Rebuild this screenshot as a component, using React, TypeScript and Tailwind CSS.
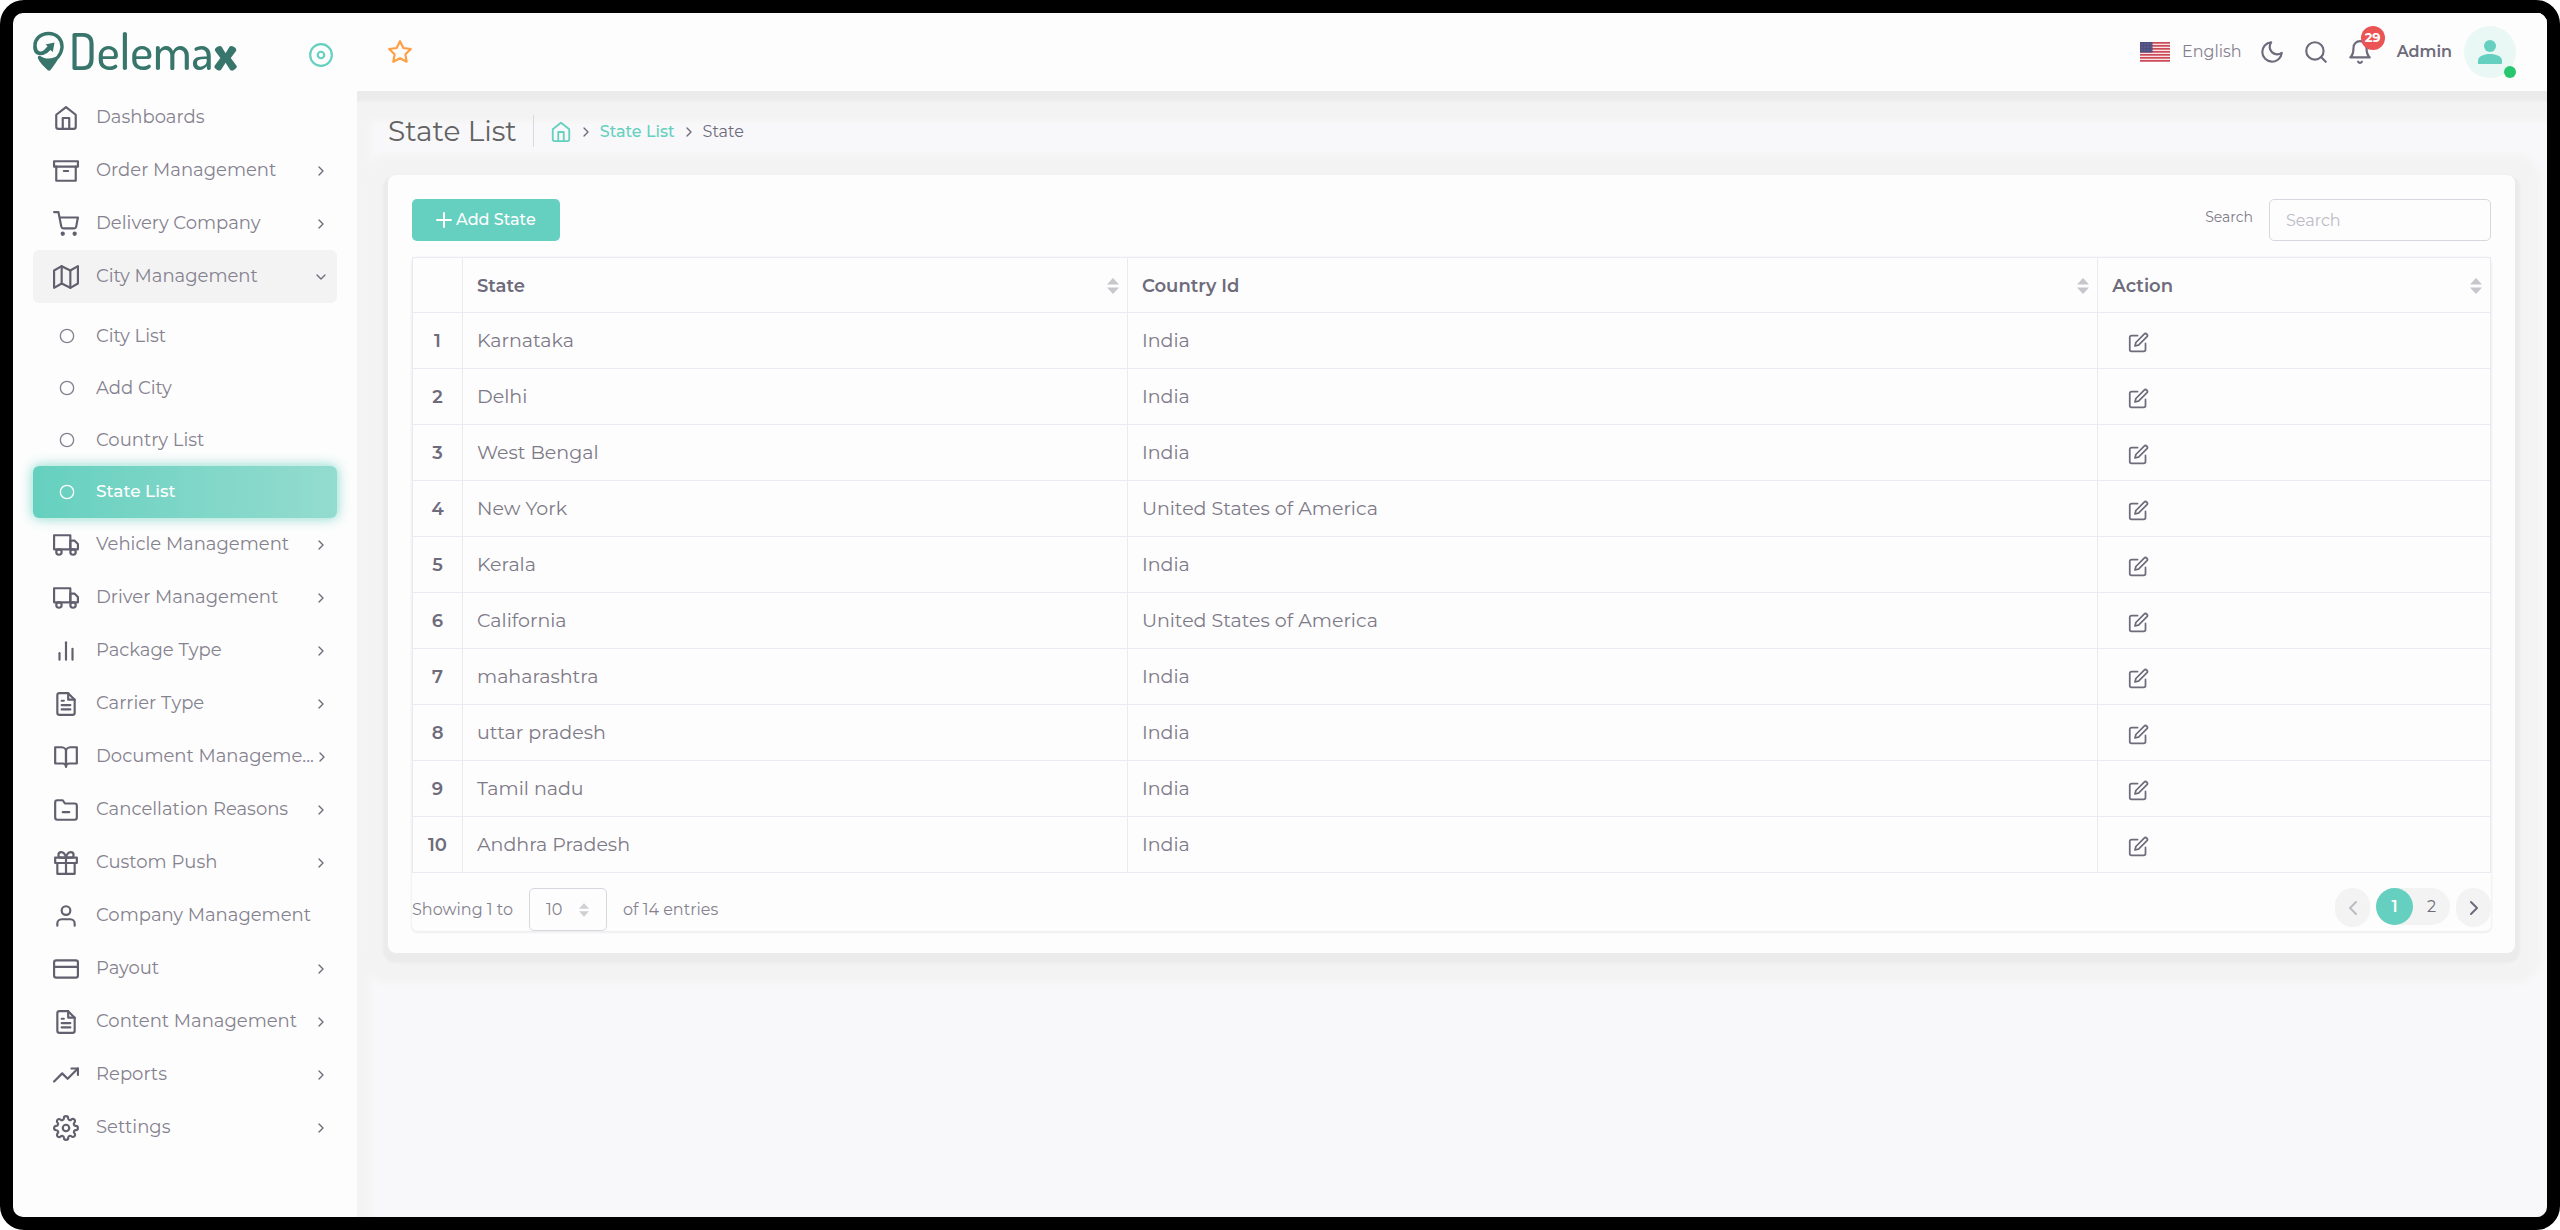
import React, { useState } from 'react';
import type { IconType } from 'react-icons';
import {
  FiArchive,
  FiBarChart2,
  FiBell,
  FiBookOpen,
  FiChevronDown,
  FiChevronLeft,
  FiChevronRight,
  FiCircle,
  FiCreditCard,
  FiDisc,
  FiEdit,
  FiFileText,
  FiFolderMinus,
  FiGift,
  FiHome,
  FiMap,
  FiMoon,
  FiPlus,
  FiSearch,
  FiSettings,
  FiShoppingCart,
  FiStar,
  FiTrendingUp,
  FiTruck,
  FiUser,
} from 'react-icons/fi';

interface NavEntry {
  label: string;
  icon: IconType;
  expandable?: boolean;
  children?: string[];
}

const NAV: NavEntry[] = [
  { label: 'Dashboards', icon: FiHome },
  { label: 'Order Management', icon: FiArchive, expandable: true },
  { label: 'Delivery Company', icon: FiShoppingCart, expandable: true },
  {
    label: 'City Management',
    icon: FiMap,
    expandable: true,
    children: ['City List', 'Add City', 'Country List', 'State List'],
  },
  { label: 'Vehicle Management', icon: FiTruck, expandable: true },
  { label: 'Driver Management', icon: FiTruck, expandable: true },
  { label: 'Package Type', icon: FiBarChart2, expandable: true },
  { label: 'Carrier Type', icon: FiFileText, expandable: true },
  { label: 'Document Manageme...', icon: FiBookOpen, expandable: true },
  { label: 'Cancellation Reasons', icon: FiFolderMinus, expandable: true },
  { label: 'Custom Push', icon: FiGift, expandable: true },
  { label: 'Company Management', icon: FiUser },
  { label: 'Payout', icon: FiCreditCard, expandable: true },
  { label: 'Content Management', icon: FiFileText, expandable: true },
  { label: 'Reports', icon: FiTrendingUp, expandable: true },
  { label: 'Settings', icon: FiSettings, expandable: true },
];

const STATES = [
  { name: 'Karnataka', country: 'India' },
  { name: 'Delhi', country: 'India' },
  { name: 'West Bengal', country: 'India' },
  { name: 'New York', country: 'United States of America' },
  { name: 'Kerala', country: 'India' },
  { name: 'California', country: 'United States of America' },
  { name: 'maharashtra', country: 'India' },
  { name: 'uttar pradesh', country: 'India' },
  { name: 'Tamil nadu', country: 'India' },
  { name: 'Andhra Pradesh', country: 'India' },
];

function Logo() {
  return (
    <a href="#" className="flex items-center gap-1 text-[#38756a]">
      <svg viewBox="0 0 32 40" className="h-10 w-8" fill="none" aria-hidden="true">
        <path
          d="M2.2 17C.6 8.500 7.500 2.500 15.500 2.500c8.500 0 14 6 13.500 14-.3 4-2 7-4 9.500"
          stroke="currentColor"
          strokeWidth="3.400"
          strokeLinecap="round"
        />
        <path
          d="M2.200 17c0 5.500 6.300 7 10.300 3.500l5-5"
          stroke="currentColor"
          strokeWidth="3.800"
          strokeLinecap="round"
        />
        <path d="M21.500 11.500l-1.700 9.500-2.300-2-4 3.500-2.800-3 4-4.300-2.200-1.700z" fill="currentColor" />
        <path
          d="M5 27.500c-.8-2.500 1-3.500 2.800-2.300 5 3.600 12 3.200 19.200-1.700-2 6-6.500 11.500-9.500 15.500-1 1-2 1-3 0C11 35.500 6.500 31.500 5 27.500z"
          fill="currentColor"
        />
      </svg>
      <span className="font-['Dosis','Roboto',sans-serif] text-[49px] leading-9 font-medium">
        Delema<span className="font-extrabold">x</span>
      </span>
    </a>
  );
}

function NavItem({ entry }: { entry: NavEntry }) {
  const { label, icon: Icon, expandable, children } = entry;
  const Chevron = children ? FiChevronDown : FiChevronRight;

  return (
    <li>
      <a
        href="#"
        className={`flex h-[53px] items-center rounded-md pr-2 pl-5 text-[18px] text-[#85828f] ${
          children ? 'bg-[#f3f3f3]' : ''
        }`}
      >
        <Icon className="size-[26px] shrink-0 text-[#625f6e]" />
        <span className="ml-[17px] flex-1 whitespace-nowrap">{label}</span>
        {expandable && <Chevron className="size-4 shrink-0 text-[#6e6b7b]" />}
      </a>
      {children && (
        <ul className="pt-[7px]">
          {children.map(child => (
            <SubItem key={child} label={child} active={child === 'State List'} />
          ))}
        </ul>
      )}
    </li>
  );
}

function SubItem({ label, active }: { label: string; active: boolean }) {
  return (
    <li>
      <a
        href="#"
        className={`flex h-[52px] items-center rounded-md pl-[26px] ${
          active
            ? 'bg-linear-to-r from-[#65d0bf] to-[#93dccf] text-[17px] font-medium text-white shadow-[0_0_12px_1px_rgba(101,208,191,0.7)]'
            : 'text-[18px] text-[#85828f]'
        }`}
      >
        <FiCircle className="size-4" />
        <span className="ml-[21px]">{label}</span>
      </a>
    </li>
  );
}

function Sidebar() {
  return (
    <aside className="z-20 w-[344px] shrink-0 bg-[#fdfdfd] px-5 pt-[18px]">
      <div className="mb-5 flex h-10 items-center justify-between pr-[3px]">
        <Logo />
        <button type="button" aria-label="Pin menu" className="pt-2 text-[#65d0bf]">
          <FiDisc className="size-[26px]" />
        </button>
      </div>
      <nav>
        <ul>
          {NAV.map(entry => (
            <NavItem key={entry.label} entry={entry} />
          ))}
        </ul>
      </nav>
    </aside>
  );
}

function UsFlag() {
  return (
    <svg viewBox="0 0 30 20" className="h-5 w-[30px]" aria-hidden="true">
      <rect width="30" height="20" fill="#f6e4e6" />
      {[0, 3, 6, 9, 12, 15, 18].map(y => (
        <rect key={y} y={y} width="30" height="1.700" fill="#cf4a58" />
      ))}
      <rect width="12.500" height="10.500" fill="#4f4f80" />
      {[2, 5, 8].map(y =>
        [2, 5, 8, 11].map(x => <circle key={`${x}-${y}`} cx={x} cy={y} r=".4" fill="#b9b9d0" />)
      )}
    </svg>
  );
}

function Header() {
  return (
    <header className="relative z-10 flex h-[78px] items-center justify-between bg-[#fdfdfd] pr-[31px] pl-[30px] shadow-[0_5px_2px_5px_#ebebeb,0_5px_6px_25px_#f3f3f3]">
      <button type="button" aria-label="Bookmarks" className="text-[#ff9f43]">
        <FiStar className="size-[26px]" />
      </button>
      <div className="flex items-center text-[#6e6b7b]">
        <button type="button" className="mr-[17px] flex items-center gap-3 text-base text-[#85828f]">
          <UsFlag />
          English
        </button>
        <div className="flex items-center gap-[18px]">
          <button type="button" aria-label="Dark mode">
            <FiMoon className="size-[26px]" />
          </button>
          <button type="button" aria-label="Search">
            <FiSearch className="size-[26px]" />
          </button>
          <button type="button" aria-label="Notifications" className="relative">
            <FiBell className="size-[26px]" />
            <span className="absolute -top-[13px] -right-3 flex size-6 items-center justify-center rounded-full bg-[#ea5455] text-[13px] font-bold text-white">
              29
            </span>
          </button>
        </div>
        <span className="ml-6 text-base font-semibold">Admin</span>
        <span className="relative ml-3 flex size-[52px] items-center justify-center rounded-full bg-[#eaf8f5]">
          <svg viewBox="0 0 24 24" className="size-6" fill="#65d0bf" aria-hidden="true">
            <circle cx="12" cy="6" r="6" />
            <path d="M0 24v-3c0-5 6-7 12-7s12 2 12 7v1.500c0 1-.5 1.500-1.500 1.500z" />
          </svg>
          <span className="absolute right-0 bottom-0 size-3 rounded-full bg-[#28c76f]" />
        </span>
      </div>
    </header>
  );
}

function Breadcrumb() {
  return (
    <div className="relative z-10 flex h-[34px] items-center">
      <h1 className="border-r border-[#d6dcdc] pr-4 text-[28px] leading-8 text-[#636363]">State List</h1>
      <nav aria-label="Breadcrumb" className="ml-4 flex items-center gap-1.5 pt-0.5 text-base text-[#6e6b7b]">
        <a href="#" aria-label="Home">
          <FiHome className="size-[22px] text-[#65d0bf]" />
        </a>
        <FiChevronRight className="size-4" />
        <a href="#" className="font-medium text-[#65d0bf]">
          State List
        </a>
        <FiChevronRight className="size-4" />
        <span>State</span>
      </nav>
    </div>
  );
}

function SortIcon() {
  return (
    <svg viewBox="0 0 12 16" className="h-4 w-3 shrink-0" fill="#c6c6cb" aria-hidden="true">
      <path d="M6 0l6 6.500H0z" />
      <path d="M6 16l6-6.500H0z" />
    </svg>
  );
}

function HeadCell({ label, width }: { label: string; width: string }) {
  return (
    <th scope="col" className={`border border-[#ebe9f1] pt-0.5 pr-2 pl-3.5 ${width}`}>
      <button type="button" className="flex w-full items-center justify-between font-semibold">
        {label}
        <SortIcon />
      </button>
    </th>
  );
}

function StateTable() {
  return (
    <table className="w-full table-fixed border-collapse text-left text-[19px] text-[#7d7a88]">
      <thead className="text-[18px] text-[#6e6b7b]">
        <tr className="h-[55px]">
          <th className="w-[50px] border border-[#ebe9f1]" aria-label="Number" />
          <HeadCell label="State" width="w-[32%]" />
          <HeadCell label="Country Id" width="" />
          <HeadCell label="Action" width="w-[18.9%]" />
        </tr>
      </thead>
      <tbody>
        {STATES.map((state, index) => (
          <tr key={state.name} className="h-14">
            <th scope="row" className="border border-[#ebe9f1] pt-0.5 text-center text-[18px] font-semibold text-[#6e6b7b]">
              {index + 1}
            </th>
            <td className="border border-[#ebe9f1] px-3.5 pt-0.5">{state.name}</td>
            <td className="border border-[#ebe9f1] px-3.5 pt-0.5">{state.country}</td>
            <td className="border border-[#ebe9f1] px-[30px] pt-0.5">
              <button type="button" aria-label={`Edit ${state.name}`} className="flex pt-0.5 text-[#6e6b7b]">
                <FiEdit className="size-[21px]" />
              </button>
            </td>
          </tr>
        ))}
      </tbody>
    </table>
  );
}

function Pagination() {
  const [page, setPage] = useState(1);
  const arrow = 'flex h-[39px] w-[35px] items-center justify-center rounded-full bg-[#f3f3f3] text-[#6e6b7b]';

  return (
    <nav aria-label="Pages" className="flex items-start">
      <button type="button" aria-label="Previous page" className={arrow} onClick={() => setPage(1)}>
        <FiChevronLeft className={`size-6 ${page === 1 ? 'opacity-40' : ''}`} />
      </button>
      <div className="mx-1.5 flex rounded-full bg-[#f3f3f3]">
        {[1, 2].map(n => (
          <button
            key={n}
            type="button"
            onClick={() => setPage(n)}
            className={`size-[37px] rounded-full text-base ${
              n === page ? 'bg-[#65d0bf] font-semibold text-white' : 'text-[#6e6b7b]'
            }`}
          >
            {n}
          </button>
        ))}
      </div>
      <button type="button" aria-label="Next page" className={arrow} onClick={() => setPage(2)}>
        <FiChevronRight className="size-6" />
      </button>
    </nav>
  );
}

function StateCard() {
  return (
    <section className="rounded-lg bg-[#fdfdfd] px-6 pt-6 pb-[22px] shadow-[0_5px_2px_5px_#ebebeb,0_5px_6px_25px_#f3f3f3]">
      <div className="mb-4 flex items-center justify-between">
        <button
          type="button"
          className="flex h-[42px] items-center rounded-[5px] bg-[#65d0bf] pr-6 pl-5 text-base font-medium text-white"
        >
          <FiPlus className="size-6" />
          Add State
        </button>
        <div className="flex items-start gap-4">
          <label htmlFor="search" className="pt-2 text-sm text-[#7d7a88]">
            Search
          </label>
          <input
            id="search"
            type="search"
            placeholder="Search"
            className="h-[42px] w-[222px] rounded-[5px] border border-[#d8d6de] bg-transparent px-4 text-base text-[#6e6b7b] placeholder:text-[#bdbbc5]"
          />
        </div>
      </div>
      <div className="rounded-md shadow-[0_1px_2px_1px_#efefef]">
        <StateTable />
        <div className="flex items-start justify-between pt-[15px]">
          <div className="flex items-center text-base text-[#85828f]">
            <label htmlFor="page-size">Showing 1 to</label>
            <span className="relative mx-4 flex items-center">
              <select
                id="page-size"
                defaultValue="10"
                className="h-[43px] w-[78px] appearance-none rounded-[5px] border border-[#d8d6de] bg-transparent pl-4 text-base"
              >
                <option>10</option>
                <option>25</option>
                <option>50</option>
              </select>
              <span className="pointer-events-none absolute right-[18px]">
                <svg viewBox="0 0 12 16" className="h-3.5 w-2.5" fill="#cfcfd4" aria-hidden="true">
                  <path d="M6 0l6 6.500H0z" />
                  <path d="M6 16l6-6.500H0z" />
                </svg>
              </span>
            </span>
            <span>of 14 entries</span>
          </div>
          <Pagination />
        </div>
      </div>
    </section>
  );
}

export default function App() {
  return (
    <div className="flex min-h-screen bg-white font-['Montserrat','Inter',sans-serif]">
      <div className="flex flex-1 rounded-[24px] bg-black p-[13px]">
        <div className="flex flex-1 overflow-hidden rounded-[10px]">
          <Sidebar />
          <div className="relative flex-1 overflow-hidden bg-[#f8f8fa] shadow-[inset_16px_0_6px_-3px_#f3f3f3]">
            <Header />
            <main className="pt-[23px] pr-8 pl-[31px]">
              <Breadcrumb />
              <div className="pt-[27px]">
                <StateCard />
              </div>
            </main>
          </div>
        </div>
      </div>
    </div>
  );
}
